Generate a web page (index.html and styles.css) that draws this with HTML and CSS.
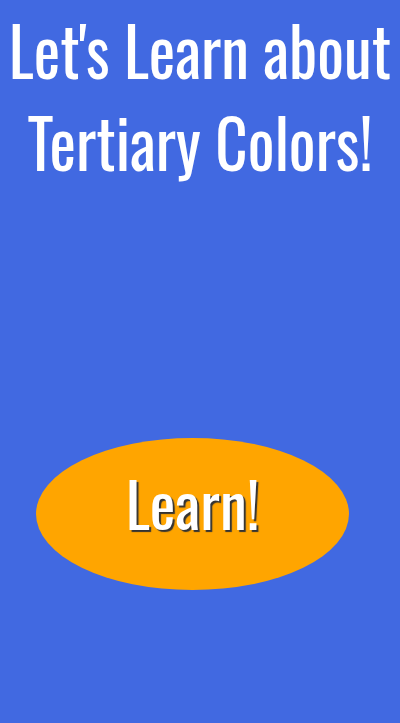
FILE: index.html
```html
<!DOCTYPE html>
<html lang="en">
<head>
<meta charset="utf-8">
<title>Tertiary Colors</title>
<link rel="stylesheet" href="styles.css">
</head>
<body>
<main class="page">
  <h1 class="title">Let's Learn about Tertiary Colors!</h1>
  <button class="learn-btn" type="button"><span class="learn-label">Learn!</span></button>
</main>
</body>
</html>
```
FILE: styles.css
```css
html, body {
  margin: 0;
  padding: 0;
}
body {
  background: #4169e1;
  height: 723px;
  overflow: hidden;
}
.page {
  display: flex;
  flex-direction: column;
  align-items: flex-start;
}
.title {
  margin: 0;
  padding: 3px 2px 0;
  width: 100%;
  box-sizing: border-box;
  font-family: "Oswald", "Liberation Sans Narrow", sans-serif;
  font-weight: 400;
  font-size: 63px;
  line-height: 86px;
  color: #fff;
  text-align: center;
  transform: scaleY(1.07);
  transform-origin: top center;
}
.learn-btn {
  margin: 263px 0 0 36px;
  width: 313px;
  height: 152px;
  border: 0;
  border-radius: 50%;
  background: #ffa500;
  padding: 0 0 24px;
  display: flex;
  justify-content: center;
  align-items: center;
  cursor: pointer;
}
.learn-label {
  font-family: "Oswald", "Liberation Sans Narrow", sans-serif;
  font-size: 61px;
  line-height: 1;
  color: #fff;
  text-shadow: 2px 2px 1px #333;
}
```
